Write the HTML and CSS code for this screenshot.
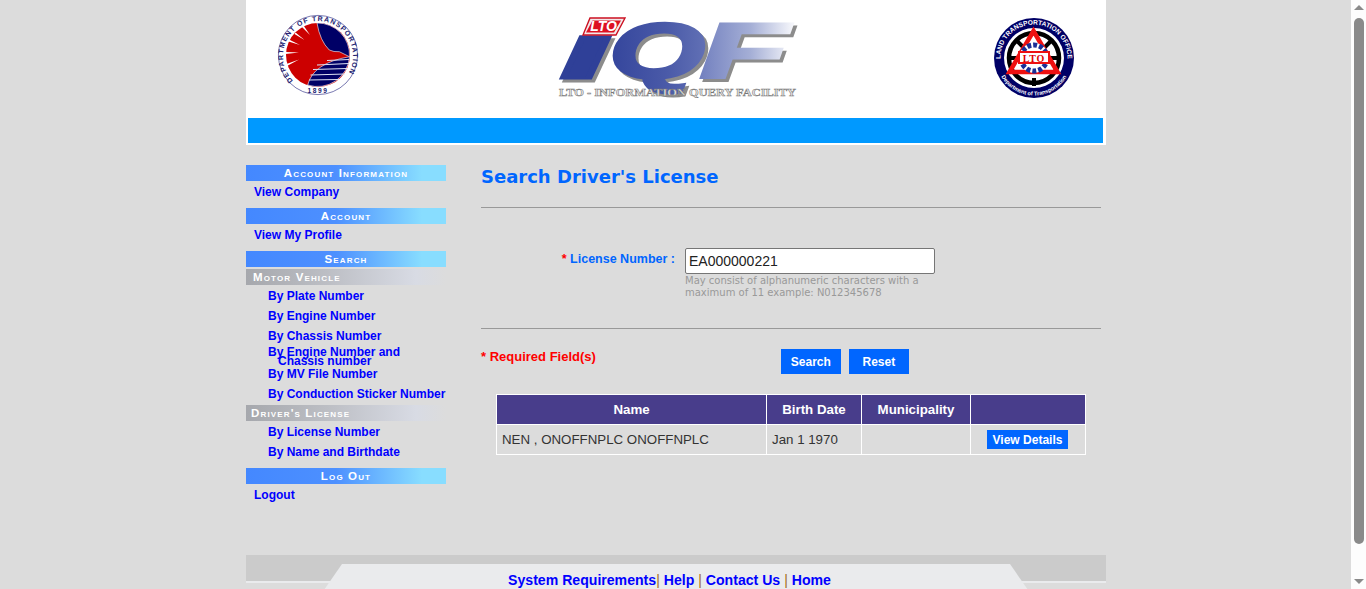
FILE: index.html
```html
<!DOCTYPE html>
<html lang="en">
<head>
<meta charset="utf-8">
<title>LTO IQF - Search Driver's License</title>
<link rel="stylesheet" href="styles.css">
</head>
<body>
<div class="page">
  <div class="wrap">
    <header class="banner">
      <div class="logos">
        <svg class="logo-dotr" viewBox="0 0 84 84" width="84" height="84" aria-label="Department of Transportation seal">
          <defs>
            <path id="dotrRing" d="M17 67.5 A35 35 0 1 1 67 67.5"/>
          </defs>
          <circle cx="42" cy="42" r="39.6" fill="#fff" stroke="#6a6aa8" stroke-width="0.9"/>
          <circle cx="42" cy="42" r="32" fill="#cc0000"/>
          <text class="seal-text"><textPath href="#dotrRing" textLength="154" lengthAdjust="spacing">DEPARTMENT OF TRANSPORTATION</textPath></text>
          <text class="seal-year" x="42" y="80" text-anchor="middle">1899</text>
          <path d="M41 10 A32 32 0 0 1 73.5 43.7 L63.3 38.7 L58 38.5 L53.3 37 Q44 28 41 10Z" fill="#000066" stroke="#fff" stroke-width="0.6"/>
          <path d="M31.7 72 Q37 50 73.5 43.7 A32 32 0 0 1 31.7 72Z" fill="#000066" stroke="#fff" stroke-width="0.6"/>
          <path d="M51 47.5 L73 46.5 M41 52 L73 50.5 M37 56.5 L71.5 55.5 M34.5 62 L69 61 M33 67 L63 66.5" stroke="#dfe3f3" stroke-width="1"/>
          <path d="M9.5 39 L23 39.6 L9.5 41Z M10.5 51 L23 46.5 L11 53Z M13 26.5 L24 32 L12.5 28.5Z M19.5 19.5 L28.5 27 L18.5 21Z M27.5 12.5 L34 22 L26 14Z" fill="#fff"/>
        </svg>
        <svg class="logo-iqf" viewBox="0 0 250 84" width="250" height="84" aria-label="LTO IQF Information Query Facility">
          <defs>
            <linearGradient id="iqfGrad" x1="0" x2="1" y1="0" y2="0">
              <stop offset="0" stop-color="#34459c"/>
              <stop offset="0.6" stop-color="#4a5aa8"/>
              <stop offset="1" stop-color="#6170b5"/>
            </linearGradient>
            <linearGradient id="iqfGradF" x1="0" x2="1" y1="0" y2="0">
              <stop offset="0" stop-color="#7280bf"/>
              <stop offset="0.55" stop-color="#a5afd6"/>
              <stop offset="1" stop-color="#f4f5fa"/>
            </linearGradient>
          </defs>
          <g class="iqf-shadow">
            <text x="5" y="63" textLength="52" lengthAdjust="spacingAndGlyphs">ı</text>
            <text x="54" y="63" textLength="96" lengthAdjust="spacingAndGlyphs">Q</text>
            <text x="145" y="63" textLength="88" lengthAdjust="spacingAndGlyphs">F</text>
          </g>
          <g class="iqf-letters">
            <text class="iqf-i" x="2" y="60" textLength="52" lengthAdjust="spacingAndGlyphs">ı</text>
            <text class="iqf-q" x="51" y="60" textLength="96" lengthAdjust="spacingAndGlyphs">Q</text>
            <text class="iqf-f" x="142" y="60" textLength="88" lengthAdjust="spacingAndGlyphs">F</text>
          </g>
          <path d="M32 0 H67 L58 17 H25Z" fill="#f2e8ea" stroke="#cc1122" stroke-width="1.4"/>
          <path d="M34.5 2.5 H63 L56 14.5 H28Z" fill="#dd1122"/>
          <text class="iqf-lto" x="45.5" y="13.4" text-anchor="middle">LTO</text>
          <text class="iqf-sub" x="1" y="78" textLength="237" lengthAdjust="spacingAndGlyphs">LTO - INFORMATION QUERY FACILITY</text>
        </svg>
        <svg class="logo-lto" viewBox="0 0 84 84" width="84" height="84" aria-label="Land Transportation Office seal">
          <defs>
            <path id="ltoTop" d="M42 75.5 a33.5 33.5 0 1 1 0 -67 a33.5 33.5 0 1 1 0 67"/>
            <path id="ltoBot" d="M42 4.5 a37.5 37.5 0 1 0 0 75 a37.5 37.5 0 1 0 0 -75"/>
          </defs>
          <circle cx="42" cy="42" r="40" fill="#000066"/>
          <circle cx="42" cy="42" r="30" fill="#fff"/>
          <text class="ring-text"><textPath href="#ltoTop" startOffset="50%" text-anchor="middle">LAND TRANSPORTATION OFFICE</textPath></text>
          <text class="ring-text ring-small"><textPath href="#ltoBot" startOffset="50%" text-anchor="middle">Department of Transportation</textPath></text>
          <circle cx="42" cy="42" r="25" fill="#fff" stroke="#000" stroke-width="4.5"/>
          <path d="M42 62 V70 M17 42 H26 M58 42 H67 M24 24 L32 32 M60 24 L52 32" stroke="#000" stroke-width="4"/>
          <path d="M41.5 15 L65.5 56 H17.5Z" fill="none" stroke="#ee1111" stroke-width="4.5"/>
          <circle cx="42" cy="42" r="15" fill="#fff"/>
          <circle cx="42" cy="42" r="13" fill="none" stroke="#1a2f96" stroke-width="5" stroke-dasharray="4 2"/>
          <rect x="26" y="35" width="32" height="13" fill="#ee1111"/>
          <rect x="28" y="37" width="28" height="9" fill="#fff"/>
          <text class="lto-mark" x="42" y="45.6" text-anchor="middle">LTO</text>
        </svg>
      </div>
      <div class="bluebar"></div>
    </header>

    <div class="content">
      <nav class="side">
        <h3 class="side-head">Account Information</h3>
        <a class="side-link" href="#">View Company</a>
        <h3 class="side-head">Account</h3>
        <a class="side-link" href="#">View My Profile</a>
        <h3 class="side-head">Search</h3>
        <h4 class="side-sub">Motor Vehicle</h4>
        <ul class="side-list">
          <li><a href="#">By Plate Number</a></li>
          <li><a href="#">By Engine Number</a></li>
          <li><a href="#">By Chassis Number</a></li>
          <li class="tight"><a href="#">By Engine Number and Chassis number</a></li>
          <li><a href="#">By MV File Number</a></li>
          <li><a href="#">By Conduction Sticker Number</a></li>
        </ul>
        <h4 class="side-sub side-sub-dl">Driver's License</h4>
        <ul class="side-list">
          <li><a href="#">By License Number</a></li>
          <li><a href="#">By Name and Birthdate</a></li>
        </ul>
        <h3 class="side-head side-head-out">Log Out</h3>
        <a class="side-link" href="#">Logout</a>
      </nav>

      <main class="main">
        <h1 class="title">Search Driver's License</h1>
        <hr class="rule">
        <form class="field">
          <label class="field-label" for="lic"><span class="req">*</span> License Number :</label>
          <div class="field-control">
            <input id="lic" class="input" type="text" value="EA000000221">
            <p class="hint">May consist of alphanumeric characters with a maximum of 11 example: N012345678</p>
          </div>
        </form>
        <hr class="rule">
        <div class="actions">
          <span class="required"><span>*</span> Required Field(s)</span>
          <div class="buttons">
            <button class="btn" type="button">Search</button>
            <button class="btn" type="button">Reset</button>
          </div>
        </div>
        <table class="results">
          <thead>
            <tr><th class="c-name">Name</th><th class="c-date">Birth Date</th><th class="c-muni">Municipality</th><th class="c-act"></th></tr>
          </thead>
          <tbody>
            <tr>
              <td>NEN , ONOFFNPLC ONOFFNPLC</td>
              <td>Jan 1 1970</td>
              <td></td>
              <td class="cell-act"><button class="btn-small" type="button">View Details</button></td>
            </tr>
          </tbody>
        </table>
      </main>
    </div>

    <footer class="foot">
      <div class="foot-plate">
        <a href="#">System Requirements</a><span class="sep">|</span> <a href="#">Help</a> <span class="sep">|</span> <a href="#">Contact Us</a> <span class="sep">|</span> <a href="#">Home</a>
      </div>
    </footer>
  </div>
</div>
<div class="scrollbar" aria-hidden="true">
  <span class="arrow-up"></span>
  <span class="thumb"></span>
  <span class="arrow-down"></span>
</div>
</body>
</html>
```

FILE: styles.css
```css
* { box-sizing: border-box; }
html, body { height: 589px; overflow: hidden; }
body {
  margin: 0;
  display: flex;
  background: #dcdcdc;
  font-family: "Liberation Sans", Arial, sans-serif;
}
.page { flex: 1; display: flex; justify-content: center; padding-left: 1px; }
.wrap { width: 860px; display: flex; flex-direction: column; }

/* banner */
.banner { background: #fff; height: 145px; padding: 0 3px 2px 2px; display: flex; flex-direction: column; }
.logos { height: 118px; display: flex; align-items: flex-start; padding: 13px 0 0 28px; }
.logo-dotr { flex: none; }
.logo-iqf { flex: none; margin: 5px 0 0 198px; overflow: visible; }
.logo-lto { flex: none; margin: 3px 0 0 184px; }
.bluebar { height: 25px; background: #0099ff; }

.seal-text { font: bold 7px "Liberation Sans", sans-serif; fill: #1a1a70; }
.seal-year { font: bold 6.6px "Liberation Sans", sans-serif; fill: #1a1a70; letter-spacing: 1.6px; }
.iqf-shadow text { font: italic bold 78px "Liberation Sans", sans-serif; fill: #8c8c8c; stroke: #8c8c8c; stroke-width: 3px; }
.iqf-letters text { font: italic bold 78px "Liberation Sans", sans-serif; stroke-width: 3px; }
.iqf-i { fill: #2f4098; stroke: #2f4098; }
.iqf-q { fill: url(#iqfGrad); stroke: url(#iqfGrad); }
.iqf-f { fill: url(#iqfGradF); stroke: url(#iqfGradF); }
.iqf-lto { font: italic bold 14px "Liberation Sans", sans-serif; fill: #fff; }
.iqf-sub { font: bold 10px "Liberation Serif", serif; fill: #e6e6e6; stroke: #777; stroke-width: 0.45px; }
.ring-text { font: bold 6.6px "Liberation Sans", sans-serif; fill: #fff; }
.ring-small { font-size: 5.6px; }
.lto-mark { font: bold 10px "Liberation Serif", serif; fill: #dd0000; letter-spacing: 0.8px; }

/* layout */
.content { height: 410px; display: flex; padding-top: 20px; flex: none; }
.side { width: 200px; flex: none; }
.main { width: 620px; margin-left: 35px; flex: none; }

/* side menu */
.side-head, .side-sub {
  margin: 0;
  height: 16px;
  font: bold 11.5px/17px "Liberation Sans", sans-serif;
  font-variant: small-caps;
  letter-spacing: 1.15px;
  color: #fff;
  white-space: nowrap;
}
.side-head { text-align: center; background: linear-gradient(to right, #4488ff 0%, #4d90ff 45%, #88ddff 88%, #88ddff 100%); }
.side-head-out { margin-top: 7px; }
.side-sub { margin-top: 2px; padding-left: 7px; background: linear-gradient(to right, #a6a8ad 0%, #bcbec4 40%, #d8dbe4 85%, #dcdcdc 100%); }
.side-sub-dl { padding-left: 5px; }
.side-link {
  display: block;
  height: 27px;
  padding: 3px 0 0 8px;
  font: bold 12px/16px "Liberation Sans", sans-serif;
  color: #0000ff;
  text-decoration: none;
}
.side-list { list-style: none; margin: 0; padding: 1px 0 0; }
.side-list li { height: 20px; padding-left: 32px; text-indent: -10px; font: bold 12px/20px "Liberation Sans", sans-serif; }
.side-list li.tight { height: 18px; padding-top: 2px; line-height: 9px; padding-right: 30px; }
.side-list a { color: #0000ff; text-decoration: none; }
.side-list li:last-child { height: 19px; }

/* main */
.title { margin: 0; height: 42px; font: bold 18px/23px "DejaVu Sans", Verdana, sans-serif; color: #0066ff; }
.rule { margin: 0; border: 0; height: 1px; background: #999; }
.field { display: flex; height: 120px; padding-top: 40px; }
.field-label { width: 194px; padding-top: 3px; text-align: right; font: bold 12.5px/16px "Liberation Sans", sans-serif; color: #0066ff; }
.req { color: #ff0000; }
.field-control { margin-left: 10px; width: 250px; }
.input {
  display: block;
  width: 250px;
  height: 26px;
  padding: 1px 3px;
  background: #fff;
  border: 1px solid #767676;
  border-radius: 2px;
  font: 14px "Liberation Sans", sans-serif;
  color: #222;
}
.hint { margin: 1px 0 0; font: 10px/12px "DejaVu Sans", Verdana, sans-serif; color: #999; }
.actions { height: 65px; display: flex; }
.required { padding-top: 20px; font: bold 13px/16px "Liberation Sans", sans-serif; color: #ff0000; }
.buttons { margin-left: 185px; padding-top: 20px; display: flex; gap: 8px; }
.btn {
  width: 60px;
  height: 25px;
  padding: 0;
  background: #0066ff;
  border: 0;
  font: bold 12px "Liberation Sans", sans-serif;
  color: #fff;
}
.results {
  margin-left: 15px;
  width: 590px;
  border-collapse: collapse;
  border: 1px solid #fff;
  table-layout: fixed;
  font: 13.3px "Liberation Sans", sans-serif;
}
.results th, .results td { border: 1px solid #fff; height: 30px; padding: 0 5px; }
.results th { background: #483d8b; color: #fff; font-weight: bold; text-align: center; }
.results td { color: #333; }
.c-name { width: 270px; }
.c-date { width: 95px; }
.c-muni { width: 109px; }
.results td.cell-act { padding: 0 0 0 16px; }
.btn-small {
  display: block;
  width: 81px;
  height: 19px;
  padding: 0;
  background: #0066ff;
  border: 0;
  font: bold 12px "Liberation Sans", sans-serif;
  color: #fff;
}

/* footer */
.foot { height: 60px; flex: none; background: linear-gradient(to bottom, #cbcbcb 0, #cbcbcb 26px, #eaebed 26px, #eaebed 28px, #dcdcdc 28px); display: flex; justify-content: center; padding-top: 9px; }
.foot-plate {
  width: 704px;
  height: 40px;
  padding: 7px 13px 0 0;
  background: #eaebed;
  clip-path: polygon(18px 0, 686px 0, 704px 26px, 704px 100%, 0 100%, 0 26px);
  text-align: center;
  font: bold 14.1px/18px "Liberation Sans", sans-serif;
  color: #0000ff;
  white-space: nowrap;
}
.foot-plate a { color: #0000ff; text-decoration: none; }
.sep { font-weight: normal; color: #a06a20; }

/* window scrollbar */
.scrollbar {
  width: 15px;
  height: 589px;
  flex: none;
  background: #fdfdfd;
  display: flex;
  flex-direction: column;
  align-items: center;
  padding-top: 5px;
}
.arrow-up, .arrow-down { width: 0; height: 0; border-left: 5px solid transparent; border-right: 5px solid transparent; }
.arrow-up { border-bottom: 5px solid #8a8a8a; }
.arrow-down { margin-top: 35px; border-top: 5px solid #8a8a8a; }
.thumb { width: 10px; height: 526px; margin-top: 8px; border-radius: 5px; background: #8a8a8a; }
```
